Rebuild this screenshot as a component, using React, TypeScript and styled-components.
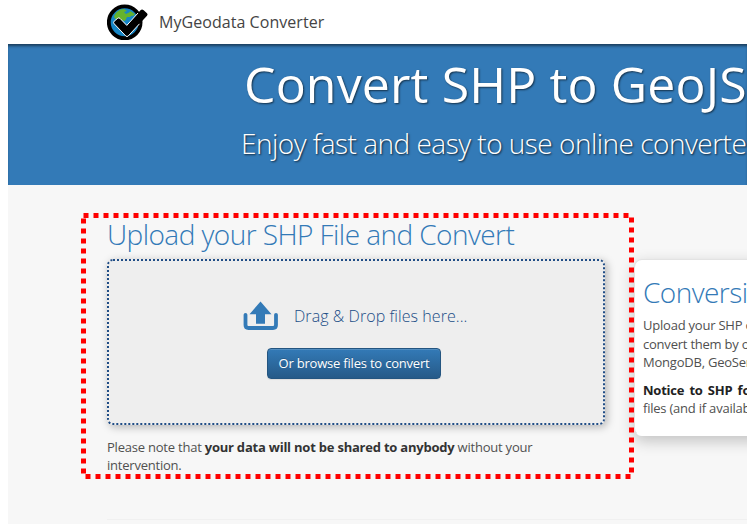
import React from "react";
import styled, { createGlobalStyle } from "styled-components";

const GlobalStyle = createGlobalStyle`
  *, *::before, *::after { box-sizing: border-box; }
  html, body { margin: 0; padding: 0; background: #fff; overflow: hidden; }
  body { font-family: "Open Sans", "Noto Sans", sans-serif; font-size: 13px; line-height: 18.5px; letter-spacing: -0.22px; color: #505050; }
  h1, h2, p { margin: 0; }
`;

const Page = styled.div`
  position: relative;
  width: 747px;
  height: 524px;
  padding-left: 8px;
  overflow: hidden;
  white-space: nowrap;
`;

const Header = styled.header`
  display: flex;
  align-items: center;
  gap: 10px;
  height: 44px;
  padding-left: 99px;
  background: #fff;
`;

const Brand = styled.span`
  font-size: 16px;
  letter-spacing: 0.05px;
  color: #444;
`;

const Hero = styled.section`
  height: 141px;
  padding: 11px 0 0 236px;
  background: #337ab7;
  box-shadow: inset 0 3px 3px -1px rgba(0, 0, 0, 0.5);
  color: #fff;
`;

const HeroTitle = styled.h1`
  font-size: 50px;
  line-height: 58px;
  font-weight: 400;
  letter-spacing: 0.14px;
  text-shadow: 1px 1px 2px rgba(0, 0, 0, 0.6);
`;

const HeroSubtitle = styled.p`
  margin: 11px 0 0 -3px;
  font-size: 28px;
  line-height: 38px;
  font-weight: 300;
  letter-spacing: -0.51px;
  text-shadow: 1px 1px 2px rgba(0, 0, 0, 0.7);
`;

const Main = styled.main`
  display: flex;
  align-items: flex-start;
  gap: 29px;
  height: 339px;
  padding: 31px 0 0 99px;
  background: #f7f7f7;
`;

const UploadColumn = styled.section`
  width: 498px;
  flex: none;
`;

const SectionTitle = styled.h2`
  font-size: 28px;
  line-height: 36px;
  font-weight: 300;
  letter-spacing: -0.55px;
  color: #337ab7;
`;

const DropZone = styled.div`
  display: flex;
  flex-direction: column;
  align-items: flex-start;
  height: 166px;
  margin-top: 7px;
  padding: 39px 0 0 134px;
  border: 2px dotted #204d86;
  border-radius: 6px;
  background: #eee;
  box-shadow: 2px 2px 8px rgba(0, 0, 0, 0.28);
`;

const DropPrompt = styled.div`
  display: flex;
  align-items: center;
  gap: 16px;
  height: 32px;
  font-size: 16px;
  font-weight: 300;
  letter-spacing: 0.07px;
  color: #204d86;
`;

const BrowseButton = styled.button`
  width: 174px;
  height: 31px;
  margin: 16px 0 0 24px;
  padding: 0 0 2px;
  border: 1px solid #245580;
  border-radius: 4px;
  background: linear-gradient(#337ab7, #265a88);
  color: #fff;
  font: 400 13px/18px "Open Sans", sans-serif;
  letter-spacing: -0.2px;
  text-shadow: 0 -1px 0 rgba(0, 0, 0, 0.2);
  box-shadow: inset 0 1px 0 rgba(255, 255, 255, 0.15), 0 1px 1px rgba(0, 0, 0, 0.075);
`;

const Note = styled.p`
  margin-top: 13px;
  line-height: 18px;
  b { color: #333; }
`;

const Divider = styled.hr`
  width: 648px;
  height: 1px;
  margin: 45px 0 0;
  border: 0;
  background: #f0f0f0;
`;

const InfoCard = styled.aside`
  flex: none;
  width: 300px;
  height: 177px;
  margin-top: 43px;
  padding: 14px 9px 0 8px;
  border: 1px solid #e3e3e3;
  border-bottom-color: #fff;
  border-radius: 8px;
  background: #fff;
  box-shadow: 0 5px 15px rgba(0, 0, 0, 0.22);
  p { margin-top: 6px; }
  p + p { margin-top: 9px; }
  b { color: #222; word-spacing: 2px; }
`;

const Highlight = styled.svg`
  position: absolute;
  left: 0;
  top: 0;
  pointer-events: none;
`;

const GlobeLogo = () => (
  <svg width="42" height="38" viewBox="0 0 42 38">
    <circle cx="17.7" cy="19.3" r="15.9" fill="#1686c6" stroke="#000" strokeWidth="3.8" />
    <path d="M7 14 C8 9 13 6 17 6 L20 8 17 9 19 11 23 9 26 11 23 14 20 14 18 18 14 17 12 20 Z" fill="#65b32e" />
    <path d="M23 8 L28 11 26 13 22 12 Z" fill="#65b32e" />
    <path d="M7.2 18.2 L10.8 15.2 Q12 14.3 13 15.4 L19.8 22.4 33.5 7.2 Q35 5.8 36.4 7 L40 10.2 Q41.2 11.3 40 12.7 L21.2 33 Q20 34.2 18.8 33 L7.2 20.8 Q6 19.4 7.2 18.2 Z" fill="#000" />
    <path d="M31 10 L19.8 22.4 13 15.4 Q12 14.3 10.8 15.2 L7.2 18.2 Q6 19.4 7.2 20.8 L18.8 33 Q20 34.2 21.2 33 L32.5 20.8" fill="none" stroke="#fff" strokeWidth="1" />
  </svg>
);

const UploadIcon = () => (
  <svg width="35" height="30" viewBox="0 0 35 30" fill="#337ab7">
    <path d="M17.5 0.5 L28.5 13.2 H22 V22.8 H13 V13.2 H6.5 Z" />
    <path d="M2.5 13.8 V24 Q2.5 27 5.5 27 H30 Q33 27 33 24 V13.8" fill="none" stroke="#337ab7" strokeWidth="3.8" strokeLinecap="round" />
  </svg>
);

export default function App() {
  return (
    <Page>
      <GlobalStyle />
      <Header>
        <GlobeLogo />
        <Brand>MyGeodata Converter</Brand>
      </Header>
      <Hero>
        <HeroTitle>Convert SHP to GeoJSON</HeroTitle>
        <HeroSubtitle>Enjoy fast and easy to use online converter</HeroSubtitle>
      </Hero>
      <Main>
        <UploadColumn>
          <SectionTitle>Upload your SHP File and Convert</SectionTitle>
          <DropZone>
            <DropPrompt>
              <UploadIcon />
              <span>Drag &amp; Drop files here...</span>
            </DropPrompt>
            <BrowseButton>Or browse files to convert</BrowseButton>
          </DropZone>
          <Note>
            Please note that <b>your data will not be shared to anybody</b> without your
            <br />
            intervention.
          </Note>
          <Divider />
        </UploadColumn>
        <InfoCard>
          <SectionTitle>Conversion</SectionTitle>
          <p>
            Upload your SHP or
            <br />
            convert them by one
            <br />
            MongoDB, GeoServer
          </p>
          <p>
            <b>Notice to SHP format</b>
            <br />
            files (and if available
          </p>
        </InfoCard>
      </Main>
      <Highlight width="747" height="524">
        <rect x="83.5" y="215.5" width="548" height="261" fill="none" stroke="#f00" strokeWidth="5" strokeDasharray="5 5" />
      </Highlight>
    </Page>
  );
}
